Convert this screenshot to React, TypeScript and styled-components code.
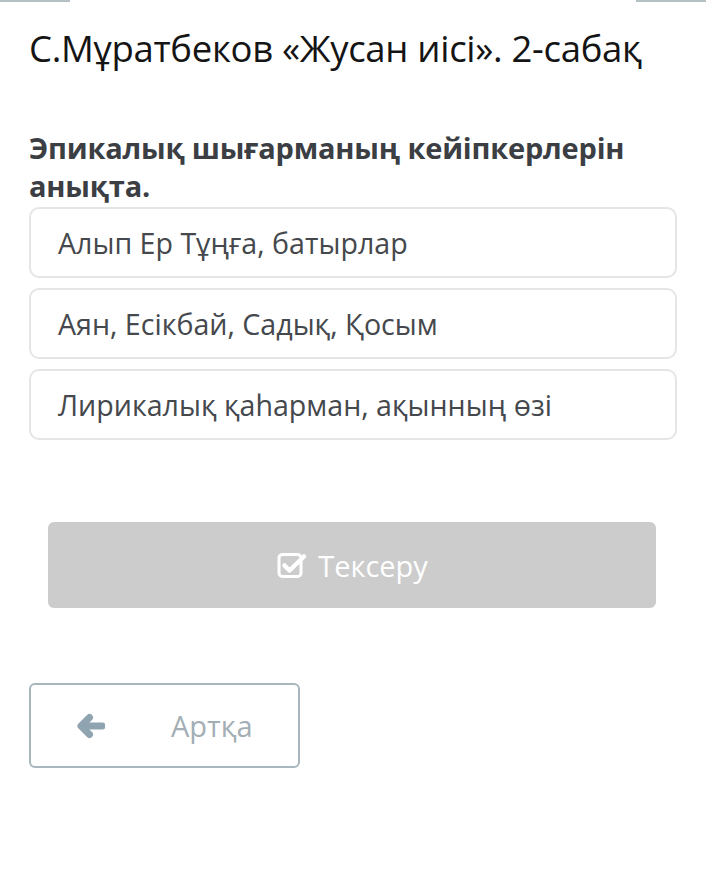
import React from 'react'
import styled, { createGlobalStyle } from 'styled-components'

const GlobalStyle = createGlobalStyle`
  html, body {
    margin: 0;
    padding: 0;
    background: #ffffff;
    font-family: "Open Sans", "Noto Sans", sans-serif;
  }
`

const TopEdge = styled.div`
  display: flex;
  justify-content: space-between;
  height: 3px;
`

const EdgeBar = styled.span<{ w: number }>`
  display: block;
  width: ${p => p.w}px;
  height: 2px;
  background: #b4c0c4;
`

const Page = styled.div`
  padding: 0 29px 0 29px;
`

const Title = styled.h1`
  margin: 21px 0 0 0;
  font-size: 36.5px;
  font-weight: 400;
  line-height: 48px;
  color: #141414;
  letter-spacing: -0.3px;
`

const Question = styled.h2`
  margin: 57px 0 0 0;
  font-size: 29px;
  font-weight: 700;
  line-height: 38px;
  color: #3b3e43;
  letter-spacing: -0.2px;
`

const Options = styled.div`
  display: flex;
  flex-direction: column;
  gap: 10px;
  margin-top: 2px;
`

const Option = styled.div`
  height: 71px;
  box-sizing: border-box;
  display: flex;
  align-items: center;
  padding-left: 27px;
  border: 2px solid #e4e6e6;
  border-radius: 10px;
  font-size: 28.6px;
  color: #45484c;
`

const CheckButton = styled.button`
  display: flex;
  align-items: center;
  justify-content: center;
  gap: 10px;
  width: 608px;
  height: 86px;
  margin: 82px 0 0 19px;
  border: none;
  border-radius: 6px;
  background: #cccccc;
  color: #ffffff;
  font-family: inherit;
  font-size: 29px;
`

const BackButton = styled.button`
  display: flex;
  align-items: center;
  width: 271px;
  height: 85px;
  box-sizing: border-box;
  margin-top: 75px;
  padding: 0 0 0 46px;
  border: 2px solid #a8b6bd;
  border-radius: 6px;
  background: #ffffff;
  color: #a3aeb5;
  font-family: inherit;
  font-size: 29px;
`

const BackLabel = styled.span`
  margin-left: 66px;
`

const CheckIcon = () => (
  <svg width="32" height="30" viewBox="0 0 32 30" fill="none">
    <rect x="3" y="4.5" width="22" height="22" rx="3.5" stroke="#fff" strokeWidth="3" />
    <path d="M8.5 15.5 L13.5 20.5 L28 6.5" stroke="#fff" strokeWidth="4.5" strokeLinecap="round" strokeLinejoin="round" />
  </svg>
)

const ArrowIcon = () => (
  <svg width="28" height="26" viewBox="0 0 28 26" fill="none">
    <path d="M25 13 H8" stroke="#8fa3b1" strokeWidth="7" strokeLinecap="round" />
    <path d="M12.5 4.5 L4 13 L12.5 21.5" stroke="#8fa3b1" strokeWidth="7" strokeLinecap="round" strokeLinejoin="round" />
  </svg>
)

const options = [
  'Алып Ер Тұңға, батырлар',
  'Аян, Есікбай, Садық, Қосым',
  'Лирикалық қаһарман, ақынның өзі',
]

export default function App() {
  return (
    <>
      <GlobalStyle />
      <TopEdge>
        <EdgeBar w={70} />
        <EdgeBar w={70} />
      </TopEdge>
      <Page>
        <Title>С.Мұратбеков «Жусан иісі». 2-сабақ</Title>
        <Question>Эпикалық шығарманың кейіпкерлерін анықта.</Question>
        <Options>
          {options.map(o => (
            <Option key={o}>{o}</Option>
          ))}
        </Options>
        <CheckButton>
          <CheckIcon />
          Тексеру
        </CheckButton>
        <BackButton>
          <ArrowIcon />
          <BackLabel>Артқа</BackLabel>
        </BackButton>
      </Page>
    </>
  )
}
